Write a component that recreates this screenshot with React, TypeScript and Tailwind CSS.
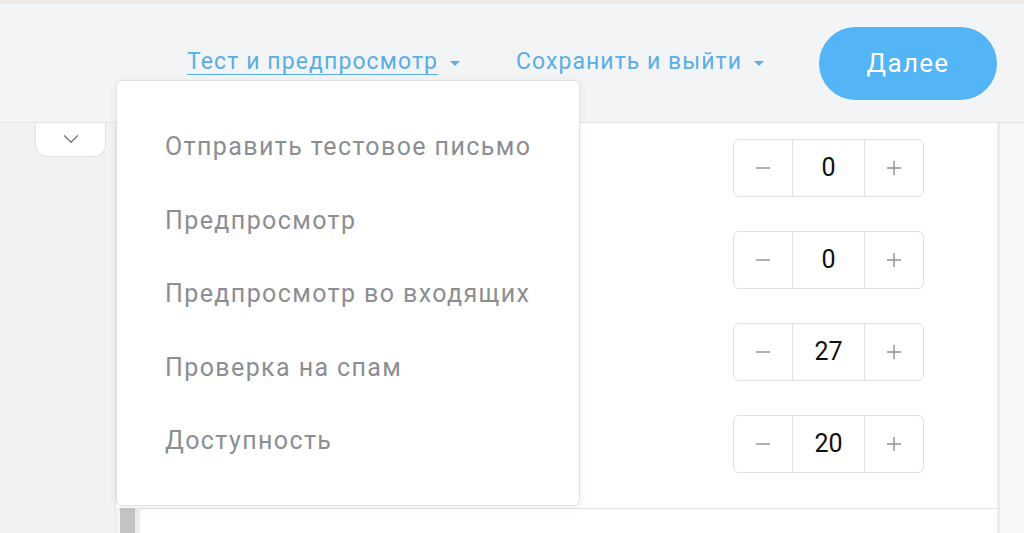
import { ChevronDown } from 'lucide-react';

const MENU = [
  'Отправить тестовое письмо',
  'Предпросмотр',
  'Предпросмотр во входящих',
  'Проверка на спам',
  'Доступность',
];

const VALUES = [0, 0, 27, 20];

function Caret() {
  return (
    <svg width="10" height="6" viewBox="0 0 10 6" className="ml-[12px] mt-[2px]">
      <path d="M0 0h10L5 5z" fill="currentColor" />
    </svg>
  );
}

function Stepper({ value }: { value: number }) {
  return (
    <div className="flex h-[58px] w-[191px] rounded-[6px] border border-[#e0e0e0] bg-white">
      <button className="flex w-[59px] items-center justify-center border-r border-[#e0e0e0] text-[#8a9099]">
        <svg width="14" height="14" viewBox="0 0 14 14">
          <path d="M0 7h14" stroke="currentColor" strokeWidth="1.4" />
        </svg>
      </button>
      <div className="flex w-[72px] items-center justify-center border-r border-[#e0e0e0] text-[25px] text-[#111]">
        {value}
      </div>
      <button className="flex flex-1 items-center justify-center text-[#8a9099]">
        <svg width="14" height="14" viewBox="0 0 14 14">
          <path d="M0 7h14M7 0v14" stroke="currentColor" strokeWidth="1.4" />
        </svg>
      </button>
    </div>
  );
}

export default function App() {
  return (
    <div className="flex h-[533px] w-[1024px] flex-col overflow-hidden bg-[#f3f3f3] font-['Roboto',sans-serif]">
      <div className="h-[4px] bg-[#efebe7]" />
      <header className="relative flex h-[119px] items-center justify-end border-b border-[#e4e5e8] bg-[#f3f4f6] pr-[27px]">
        <div className="mb-[1px] flex items-center text-[23px] tracking-[1.1px] text-[#5aaee6]">
          <span className="underline decoration-1 underline-offset-[5px]">Тест и предпросмотр</span>
          <Caret />
        </div>
        <div className="mb-[1px] ml-[56px] flex items-center text-[23px] tracking-[1.05px] text-[#5aaee6]">
          <span>Сохранить и выйти</span>
          <Caret />
        </div>
        <button className="ml-[55px] h-[73px] w-[178px] rounded-full bg-[#53b4f6] text-[26px] tracking-[1.3px] text-white">
          Далее
        </button>
        <div className="absolute left-[116px] top-[76px] z-10 flex h-[426px] w-[464px] flex-col rounded-[6px] border border-[#e2e2e2] bg-white pt-[29px] shadow-[0_2px_8px_rgba(0,0,0,0.06)]">
          {MENU.map((item) => (
            <div
              key={item}
              className="flex h-[73.5px] items-center pl-[48px] text-[25px] tracking-[1.4px] text-[#8b8e93]"
            >
              {item}
            </div>
          ))}
        </div>
      </header>
      <div className="flex flex-1">
        <aside className="w-[116px] border-r border-[#e6e6e6] bg-[#f2f2f2]">
          <div className="ml-[35px] flex h-[34px] w-[71px] items-start justify-center rounded-b-[12px] border border-t-0 border-[#e2e2e2] bg-white pt-[3px]">
            <ChevronDown className="h-[26px] w-[26px] text-[#777]" strokeWidth={1.2} />
          </div>
        </aside>
        <main className="flex w-[884px] flex-col border-r-[3px] border-[#ececec] bg-white">
          <div className="flex h-[385px] flex-col items-end gap-[34px] pr-[73px] pt-[16px]">
            {VALUES.map((v, i) => (
              <Stepper key={i} value={v} />
            ))}
          </div>
          <div className="flex flex-1">
            <div className="w-[4px] bg-[#f2f2f2]" />
            <div className="w-[15px] bg-[#c4c4c4]" />
            <div className="w-[5px] bg-[#ececec]" />
            <div className="flex-1 border-t border-[#e4e4e4] bg-white" />
          </div>
        </main>
        <div className="flex-1 bg-[#f7f7f7]" />
      </div>
    </div>
  );
}
